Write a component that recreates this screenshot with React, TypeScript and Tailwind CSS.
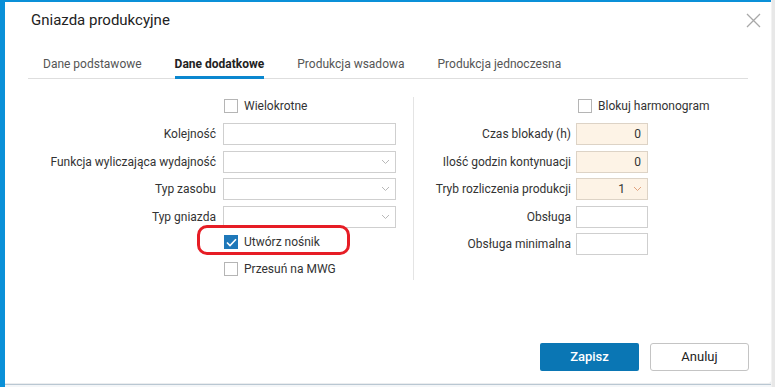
import React from "react";

const Check = ({ checked = false }: { checked?: boolean }) =>
  checked ? (
    <div className="w-[14px] h-[14px] bg-[#1f78b9] flex items-center justify-center shrink-0">
      <svg width="11" height="9" viewBox="0 0 11 9">
        <path d="M1 4.5 L4 7.5 L10 1.2" fill="none" stroke="#fff" strokeWidth="1.6" />
      </svg>
    </div>
  ) : (
    <div className="w-[14px] h-[14px] bg-white border border-[#b5b5b5] shrink-0" />
  );

const Chevron = ({ color = "#b8b8b8" }: { color?: string }) => (
  <svg width="9" height="6" viewBox="0 0 9 6">
    <path d="M1 1 L4.5 4.5 L8 1" fill="none" stroke={color} strokeWidth="1" />
  </svg>
);

const LeftRow = ({ label, select, mt }: { label: string; select?: boolean; mt: string }) => (
  <div className={`flex items-center h-[22px] ${mt}`}>
    <div className="w-[195px] text-right text-[12px] text-[#333] pr-[7px]">{label}</div>
    <div className="w-[173px] h-[22px] border border-[#cfcfcf] bg-white flex items-center justify-end pr-[5px]">
      {select && <Chevron />}
    </div>
  </div>
);

const RightRow = ({
  label,
  value,
  peach,
  select,
  mt,
}: {
  label: string;
  value?: string;
  peach?: boolean;
  select?: boolean;
  mt: string;
}) => (
  <div className={`flex items-center h-[22px] ${mt}`}>
    <div className="w-[162px] text-right text-[12px] text-[#333] pr-[5px]">{label}</div>
    <div
      className={`w-[72px] h-[22px] border flex items-center justify-end text-[12px] text-[#333] ${
        peach ? "bg-[#fdf3e6] border-[#ddd3c6]" : "bg-white border-[#cfcfcf]"
      } ${select ? "pr-[5px] gap-[8px]" : "pr-[6px]"}`}
    >
      {value && <span>{value}</span>}
      {select && <Chevron color="#e0a27e" />}
    </div>
  </div>
);

export default function App() {
  return (
    <div className="w-[775px] h-[387px] flex overflow-hidden bg-[#ebedef] font-[Roboto,sans-serif]">
      <div className="w-[5px] bg-[#0a90d8] shrink-0" />
      <div className="w-[766px] flex flex-col shrink-0">
        <div className="h-[383px] bg-white border-t-2 border-[#0a90d8] rounded-br-[3px] flex flex-col">
          {/* Title */}
          <div className="h-[36px] flex items-center justify-between pl-[26px] pr-[10px]">
            <div className="text-[15px] text-[#222]">Gniazda produkcyjne</div>
            <svg width="15" height="15" viewBox="0 0 15 15">
              <path d="M1 1 L14 14 M14 1 L1 14" stroke="#a8a8a8" strokeWidth="1.3" />
            </svg>
          </div>
          {/* Tabs */}
          <div className="mx-[23px] mt-[18px] flex border-b border-[#dedede] text-[12px] leading-[16px] pl-[15px] gap-[33px]">
            <div className="pb-[4px] border-b-[3px] border-transparent -mb-px text-[#555]">Dane podstawowe</div>
            <div className="pb-[4px] border-b-[3px] border-[#0a87cf] -mb-px font-bold text-[#222]">Dane dodatkowe</div>
            <div className="pb-[4px] border-b-[3px] border-transparent -mb-px text-[#555]">Produkcja wsadowa</div>
            <div className="pb-[4px] border-b-[3px] border-transparent -mb-px text-[#555]">Produkcja jednoczesna</div>
          </div>
          {/* Form */}
          <div className="mx-[23px] pt-[16px] flex items-start">
            <div className="w-[385px] flex flex-col">
              <div className="flex items-center h-[22px] pl-[196px] gap-[6px]">
                <Check />
                <span className="text-[12px] text-[#333]">Wielokrotne</span>
              </div>
              <LeftRow label="Kolejność" mt="mt-[6px]" />
              <LeftRow label="Funkcja wyliczająca wydajność" select mt="mt-[6px]" />
              <LeftRow label="Typ zasobu" select mt="mt-[5px]" />
              <LeftRow label="Typ gniazda" select mt="mt-[6px]" />
              <div className="flex items-center h-[22px] pl-[196px] mt-[3px]">
                <div className="relative flex items-center gap-[6px]">
                  <div className="absolute left-[-27px] top-[-8px] w-[153px] h-[30px] border-[3px] border-[#e61d25] rounded-[10px]" />
                  <Check checked />
                  <span className="text-[12px] text-[#333]">Utwórz nośnik</span>
                </div>
              </div>
              <div className="flex items-center h-[22px] pl-[196px] gap-[6px] mt-[5px]">
                <Check />
                <span className="text-[12px] text-[#333]">Przesuń na MWG</span>
              </div>
            </div>
            <div className="w-px self-stretch bg-[#e4e4e4] mt-[2px]" />
            <div className="flex flex-col">
              <div className="flex items-center h-[22px] pl-[164px] gap-[6px]">
                <Check />
                <span className="text-[12px] text-[#333]">Blokuj harmonogram</span>
              </div>
              <RightRow label="Czas blokady (h)" value="0" peach mt="mt-[6px]" />
              <RightRow label="Ilość godzin kontynuacji" value="0" peach mt="mt-[6px]" />
              <RightRow label="Tryb rozliczenia produkcji" value="1" peach select mt="mt-[5px]" />
              <RightRow label="Obsługa" mt="mt-[6px]" />
              <RightRow label="Obsługa minimalna" mt="mt-[5px]" />
            </div>
          </div>
          {/* Footer */}
          <div className="mt-auto flex justify-end gap-[11px] pr-[22px] pb-[12px]">
            <button className="w-[99px] h-[28px] rounded-[2px] bg-[#0a76b4] text-white text-[13px] font-medium">
              Zapisz
            </button>
            <button className="w-[99px] h-[28px] rounded-[3px] bg-white border border-[#c4c4c4] text-[#222] text-[13px]">
              Anuluj
            </button>
          </div>
        </div>
        <div className="h-px bg-[#b9c7d2] mt-[1px]" />
        <div className="flex-1 bg-[#f4f6f8]" />
      </div>
      <div className="flex-1 bg-[#e8e8e8] border-l border-[#f2f2f2]" />
    </div>
  );
}
